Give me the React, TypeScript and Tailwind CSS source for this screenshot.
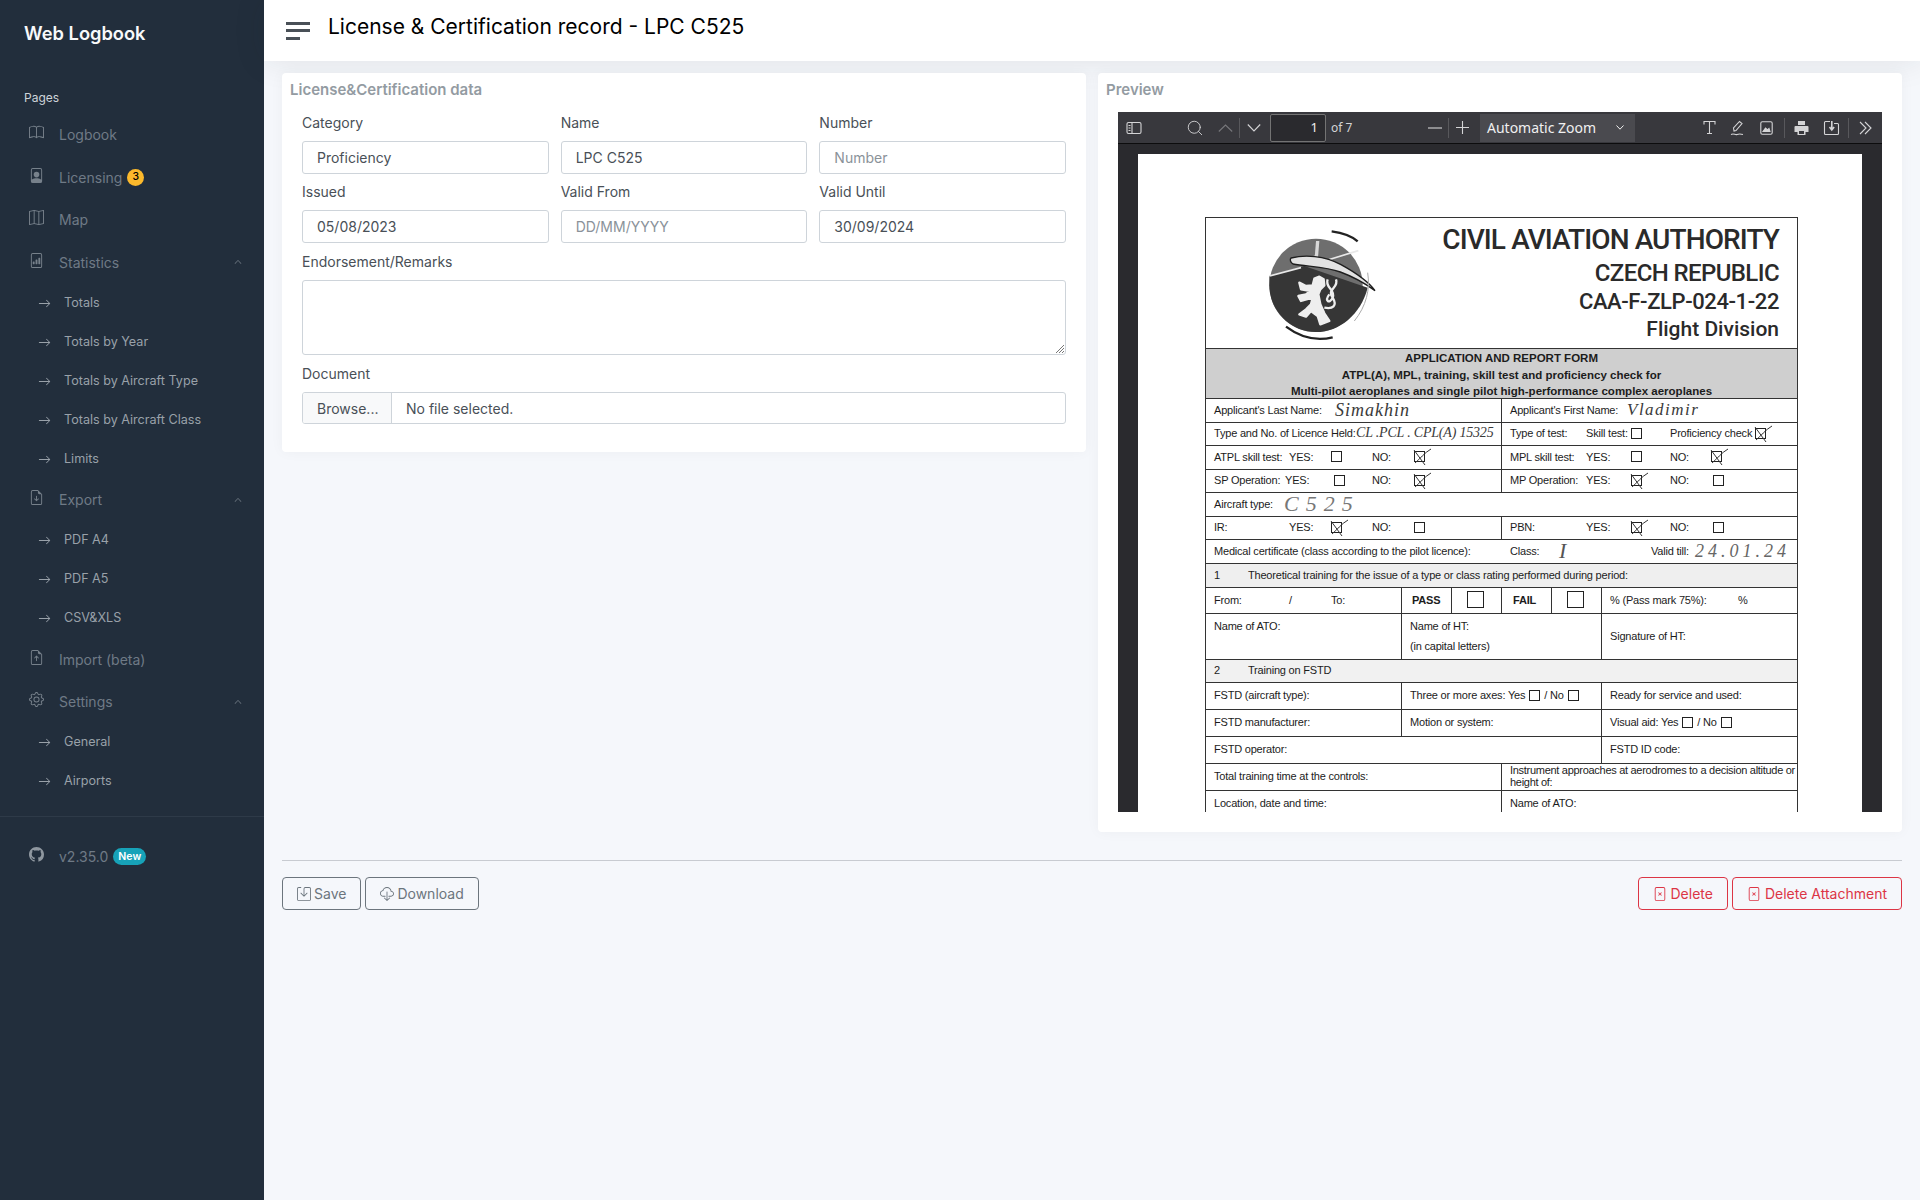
import type { ReactNode } from "react";
import {
  BsArrowRight,
  BsBook,
  BsChevronUp,
  BsCloudDownload,
  BsFileBarGraph,
  BsFileEarmarkArrowDown,
  BsFileEarmarkArrowUp,
  BsFilePerson,
  BsFileX,
  BsGear,
  BsGithub,
  BsMap,
  BsSave,
} from "react-icons/bs";
import { Search } from "lucide-react";

function NavItem({ icon, label, extra, open }: { icon: ReactNode; label: string; extra?: ReactNode; open?: boolean }) {
  return (
    <div className="flex h-[42.5px] items-center pl-[29px] pr-[22px] text-[14px] text-[#6f7a86]">
      <span className="-mt-[4px] w-[30px] text-[15px] text-[#77818b]">{icon}</span>
      <span>{label}</span>
      {extra}
      {open && <BsChevronUp className="ml-auto text-[8px] text-[#8a939c]" />}
    </div>
  );
}

function SubItem({ label }: { label: string }) {
  return (
    <div className="flex h-[39px] items-center pl-[38px] text-[12.6px] text-[#99a1a9]">
      <BsArrowRight className="mr-[13px] w-[13px] text-[13px]" />
      <span>{label}</span>
    </div>
  );
}

function Sidebar() {
  return (
    <aside className="flex w-[264px] shrink-0 flex-col bg-[#222e3c]">
      <div className="pl-[24px] pt-[22px] text-[18.3px] font-semibold leading-[22px] text-[#f8f9fa]">Web Logbook</div>
      <div className="pl-[24px] pt-[46px] pb-[8.5px] text-[12px] leading-[15px] text-[#ced4da]">Pages</div>
      <NavItem icon={<BsBook />} label="Logbook" />
      <NavItem
        icon={<BsFilePerson />}
        label="Licensing"
        extra={
          <span className="ml-[5px] flex h-[17px] w-[17px] items-center justify-center rounded-full bg-[#fcb92c] text-[10.5px] font-medium text-black">
            3
          </span>
        }
      />
      <NavItem icon={<BsMap />} label="Map" />
      <NavItem icon={<BsFileBarGraph />} label="Statistics" open />
      <SubItem label="Totals" />
      <SubItem label="Totals by Year" />
      <SubItem label="Totals by Aircraft Type" />
      <SubItem label="Totals by Aircraft Class" />
      <SubItem label="Limits" />
      <NavItem icon={<BsFileEarmarkArrowDown />} label="Export" open />
      <SubItem label="PDF A4" />
      <SubItem label="PDF A5" />
      <SubItem label="CSV&XLS" />
      <NavItem icon={<BsFileEarmarkArrowUp />} label="Import (beta)" />
      <NavItem icon={<BsGear />} label="Settings" open />
      <SubItem label="General" />
      <SubItem label="Airports" />
      <div className="mt-[15px] border-t border-[#2e3a48] pt-[18px]">
        <NavItem
          icon={<BsGithub className="text-[#8f979f]" />}
          label="v2.35.0"
          extra={
            <span className="ml-[5px] rounded-full bg-[#17a2b8] px-[5px] py-[1px] text-[10.5px] font-semibold leading-[15px] text-white">
              New
            </span>
          }
        />
      </div>
    </aside>
  );
}

function Field({ label, value, placeholder }: { label: string; value?: string; placeholder?: string }) {
  return (
    <div>
      <div className="mb-[8px] text-[14px] leading-[21px] text-[#495057]">{label}</div>
      <div className={`flex h-[33px] items-center rounded-[3px] border border-[#ced4da] bg-white px-[14px] text-[14px] ${value ? "text-[#495057]" : "text-[#8a9299]"}`}>
        {value ?? placeholder}
      </div>
    </div>
  );
}

function DataCard() {
  return (
    <section className="h-[379px] w-[804px] rounded-[4px] bg-white shadow-[0_0_14px_rgba(33,37,41,0.04)]">
      <h2 className="pl-[8px] pt-[6px] text-[15px] font-semibold leading-[21px] text-[#939ba2]">License&amp;Certification data</h2>
      <div className="px-[20px] pt-[12px]">
        <div className="grid grid-cols-3 gap-x-[12px] gap-y-[7px]">
          <Field label="Category" value="Proficiency" />
          <Field label="Name" value="LPC C525" />
          <Field label="Number" placeholder="Number" />
          <Field label="Issued" value="05/08/2023" />
          <Field label="Valid From" placeholder="DD/MM/YYYY" />
          <Field label="Valid Until" value="30/09/2024" />
        </div>
        <div className="mt-[8px] text-[14px] leading-[21px] text-[#495057]">Endorsement/Remarks</div>
        <div className="relative mt-[8px] h-[75px] rounded-[3px] border border-[#ced4da] bg-white">
          <svg className="absolute bottom-0 right-0" width="12" height="12" viewBox="0 0 12 12" stroke="#777" strokeWidth="1">
            <path d="M11 3 3 11M11 6 6 11M11 9 9 11" />
          </svg>
        </div>
        <div className="mt-[8px] text-[14px] leading-[21px] text-[#495057]">Document</div>
        <div className="mt-[8px] flex h-[32px] items-center overflow-hidden rounded-[3px] border border-[#ced4da] text-[14px] text-[#495057]">
          <span className="flex h-full w-[89px] items-center border-r border-[#ced4da] bg-[#f8f9fa] pl-[14px]">Browse...</span>
          <span className="pl-[14px]">No file selected.</span>
        </div>
      </div>
    </section>
  );
}

function ToolSep({ className }: { className: string }) {
  return <span className={`h-[20px] w-px bg-[#58585c] ${className}`} />;
}

function PdfToolbar() {
  return (
    <div className="flex h-[32px] shrink-0 items-center border-b border-[#0c0c0d] bg-[#38383d] font-['Noto_Sans',sans-serif] text-[#d4d4d6]">
      <svg className="ml-[8px]" width="16" height="16" viewBox="0 0 16 16" fill="none" stroke="currentColor" strokeWidth="1.1">
        <rect x="1" y="2.5" width="14" height="11" rx="1.5" />
        <path d="M6 2.5v11M2.5 5.5h2M2.5 8h2M2.5 10.5h2" />
      </svg>
      <Search className="ml-[44px]" size={18} strokeWidth={1.2} />
      <svg className="ml-[14px] text-[#77777b]" width="15" height="8" viewBox="0 0 15 8" fill="none" stroke="currentColor" strokeWidth="1.1">
        <path d="M.8 7.5 7.5 1l6.7 6.5" />
      </svg>
      <ToolSep className="ml-[6px]" />
      <svg className="ml-[7px]" width="14" height="8" viewBox="0 0 14 8" fill="none" stroke="currentColor" strokeWidth="1.1">
        <path d="M.8.5 7 7l6.2-6.5" />
      </svg>
      <div className="ml-[9px] flex h-[28px] w-[56px] items-center justify-end rounded-[2px] border border-[#737373] bg-[#2a2a2e] pr-[7px] text-[13px] text-[#f0f0f0]">1</div>
      <span className="ml-[5px] w-[22px] whitespace-nowrap text-[12px] text-[#d4d4d6]">of 7</span>
      <svg className="ml-[75px]" width="14" height="2" viewBox="0 0 14 2" fill="none" stroke="currentColor" strokeWidth="1.1">
        <path d="M0 1h14" />
      </svg>
      <ToolSep className="ml-[6px]" />
      <svg className="ml-[7px]" width="13" height="13" viewBox="0 0 13 13" fill="none" stroke="currentColor" strokeWidth="1.1">
        <path d="M0 6.5h13M6.5 0v13" />
      </svg>
      <div className="ml-[11px] flex h-[28px] w-[155px] items-center bg-[#4a4a4f] pl-[7px] text-[14px] text-[#f0f0f0]">
        Automatic Zoom
        <svg className="ml-auto mr-[11px]" width="8" height="5" viewBox="0 0 8 5" fill="none" stroke="currentColor" strokeWidth="1">
          <path d="M.5.5 4 4.2 7.5.5" />
        </svg>
      </div>
      <svg className="ml-[67px]" width="15" height="15" viewBox="0 0 15 15" fill="none" stroke="currentColor" strokeWidth="1.1">
        <path d="M2 4.5V1.5h11v3M7.5 1.5V13.5M5 13.5h5" />
      </svg>
      <svg className="ml-[13px]" width="14" height="16" viewBox="0 0 14 16" fill="none" stroke="currentColor" strokeWidth="1.1">
        <path d="M4 11 3.5 8 9.5 1.5l2.5 2L6 10.5 4 11ZM1 14.5c3-1.5 4 .8 6 0s3-.8 6 0" />
      </svg>
      <svg className="ml-[16px]" width="13" height="14" viewBox="0 0 13 14" fill="none" stroke="currentColor" strokeWidth="1.1">
        <rect x="0.8" y="0.8" width="11.4" height="12.4" rx="1.5" />
        <path d="M3 10.5 5.5 7l2 2 1.5-1.5 1 3H3Z" fill="currentColor" />
      </svg>
      <ToolSep className="ml-[11px]" />
      <svg className="ml-[9px]" width="15" height="16" viewBox="0 0 15 16" fill="currentColor">
        <path d="M4 1h7v4H4zM1.5 6h12a1 1 0 0 1 1 1v5h-3v3h-8v-3H.5V7a1 1 0 0 1 1-1Z" />
        <path d="M5 11h5v3H5z" fill="#38383d" />
      </svg>
      <svg className="ml-[14px]" width="17" height="16" viewBox="0 0 17 16" fill="none" stroke="currentColor" strokeWidth="1.1">
        <path d="M7 1.5H2.5a1 1 0 0 0-1 1v11a1 1 0 0 0 1 1h12a1 1 0 0 0 1-1v-9a1 1 0 0 0-1-1H11" />
        <path d="M8.8 1v8M6.5 7l2.3 3 2.3-3" strokeWidth="1.6" />
      </svg>
      <ToolSep className="ml-[8px]" />
      <svg className="ml-[10px]" width="13" height="14" viewBox="0 0 13 14" fill="none" stroke="currentColor" strokeWidth="1.1">
        <path d="M1 1l6 6-6 6M6 1l6 6-6 6" />
      </svg>
    </div>
  );
}

function Box({ crossed, className }: { crossed?: boolean; className?: string }) {
  return (
    <span className={`relative inline-block h-[11px] w-[11px] shrink-0 border border-[#222] ${className ?? ""}`}>
      {crossed && (
        <svg className="absolute -left-[3px] -top-[5px] overflow-visible" width="20" height="20" viewBox="0 0 20 20" fill="none" stroke="#333" strokeWidth="1">
          <path d="M2 3 13 18M3 16C8 12 12 6 19 2" />
        </svg>
      )}
    </span>
  );
}

function Row({ h, className, children }: { h: string; className?: string; children: ReactNode }) {
  return <div className={`flex items-center border-b-[1.5px] border-[#333] ${h} ${className ?? ""}`}>{children}</div>;
}

function Cell({ w, children, border = true }: { w: string; children?: ReactNode; border?: boolean }) {
  return <div className={`flex h-full shrink-0 items-center pb-[2px] pl-[8px] ${border ? "border-r border-[#333]" : ""} ${w}`}>{children}</div>;
}

function Hand({ className, children }: { className: string; children: ReactNode }) {
  return <span className={`font-['Liberation_Serif',serif] italic text-[#3a3a3a] ${className}`}>{children}</span>;
}

function Crest() {
  return (
    <svg width="120" height="120" viewBox="0 0 360 360" className="ml-[55px] mt-[8px] shrink-0">
      <circle cx="165" cy="178" r="140" fill="#6e6e6e" />
      <path d="M25 150 130 120 320 185C300 265 235 318 165 318 85 318 25 250 25 178Z" fill="#363636" />
      <path d="M25 150 120 125M200 102 292 74" stroke="#e8e8e8" strokeWidth="5" fill="none" />
      <path d="M165 45h10l-4 50h-10Z" fill="#d8d8d8" />
      <path d="M132 96 165 88 170 96Z" fill="#d8d8d8" />
      <path d="M90 96c40-10 100-8 150 20 40 22 80 48 102 78-30-22-66-42-104-56-44-16-100-16-142-24-8-4-10-14-6-18Z" fill="#e2e2e2" stroke="#1e1e1e" strokeWidth="4" />
      <path d="M160 158 175 152 188 160 190 178 178 190 172 205 178 235 190 262 205 285 178 295 170 270 150 255 135 272 115 265 135 250 150 235 155 215 120 225 112 210 135 205 150 195 120 190 115 170 135 180 155 178Z" fill="#eee" stroke="#eee" strokeWidth="7" strokeLinejoin="round" />
      <path d="M200 160c-10 25 25 30 15 55-10 20-25 10-10-10M225 160c10 25-30 30-10 55 15 25 0 35-25 30" stroke="#eee" strokeWidth="7" fill="none" />
      <path d="M212 16c30 4 60 14 78 30" stroke="#222" strokeWidth="7" fill="none" />
      <path d="M75 302c40 30 90 44 140 32" stroke="#222" strokeWidth="7" fill="none" />
      <path d="M320 140c8 50-4 100-40 145" stroke="#aaa" strokeWidth="3" fill="none" />
    </svg>
  );
}

function PdfPage() {
  return (
    <div className="mx-auto h-[658px] w-[724px] overflow-hidden bg-white pl-[67px] pt-[63px] font-['Liberation_Sans',sans-serif]">
      <div className="w-[593px] border-x-[1.5px] border-t-[1.5px] border-[#333] text-[11px] leading-[12px] tracking-[-0.2px] text-[#1c1c1c]">
        <div className="flex h-[131px] border-b-[1.5px] border-[#333]">
          <Crest />
          <div className="ml-auto pr-[18px] pt-[5px] text-right font-['Roboto',sans-serif] font-medium text-[#2a2a2a]">
            <div className="text-[28px] leading-[34px] tracking-[-0.9px]">CIVIL AVIATION AUTHORITY</div>
            <div className="text-[24px] leading-[32px] tracking-[-0.6px]">CZECH REPUBLIC</div>
            <div className="text-[22px] leading-[25px] tracking-[-0.4px]">CAA-F-ZLP-024-1-22</div>
            <div className="text-[21px] leading-[30px] tracking-normal">Flight Division</div>
          </div>
        </div>
        <div className="flex h-[50px] flex-col items-center justify-center border-b-[1.5px] border-[#333] bg-[#cfcfcf] pt-[3px] text-[11.5px] font-bold leading-[16.5px] tracking-normal">
          <div>APPLICATION AND REPORT FORM</div>
          <div>ATPL(A), MPL, training, skill test and proficiency check for</div>
          <div>Multi-pilot aeroplanes and single pilot high-performance complex aeroplanes</div>
        </div>
        <Row h="h-[24px]">
          <Cell w="w-[296px]">
            <span className="w-[121px]">Applicant's Last Name:</span>
            <Hand className="text-[18px] tracking-[1px]">Simakhin</Hand>
          </Cell>
          <Cell w="w-[297px]" border={false}>
            <span className="w-[117px]">Applicant's First Name:</span>
            <Hand className="text-[17px] tracking-[1.5px]">Vladimir</Hand>
          </Cell>
        </Row>
        <Row h="h-[23px]">
          <Cell w="w-[296px]">
            <span className="w-[142px]">Type and No. of Licence Held:</span>
            <Hand className="whitespace-nowrap text-[14px]">CL .PCL . CPL(A) 15325</Hand>
          </Cell>
          <Cell w="w-[297px]" border={false}>
            <span className="w-[76px]">Type of test:</span>
            <span className="w-[45px]">Skill test:</span>
            <Box />
            <span className="ml-[28px] w-[85px]">Proficiency check</span>
            <Box crossed />
          </Cell>
        </Row>
        <Row h="h-[24px]">
          <Cell w="w-[296px]">
            <span className="w-[75px]">ATPL skill test:</span>
            <span className="w-[42px]">YES:</span>
            <Box />
            <span className="ml-[30px] w-[42px]">NO:</span>
            <Box crossed />
          </Cell>
          <Cell w="w-[297px]" border={false}>
            <span className="w-[76px]">MPL skill test:</span>
            <span className="w-[45px]">YES:</span>
            <Box />
            <span className="ml-[28px] w-[41px]">NO:</span>
            <Box crossed />
          </Cell>
        </Row>
        <Row h="h-[23px]">
          <Cell w="w-[296px]">
            <span className="w-[71px]">SP Operation:</span>
            <span className="w-[49px]">YES:</span>
            <Box />
            <span className="ml-[27px] w-[42px]">NO:</span>
            <Box crossed />
          </Cell>
          <Cell w="w-[297px]" border={false}>
            <span className="w-[76px]">MP Operation:</span>
            <span className="w-[45px]">YES:</span>
            <Box crossed />
            <span className="ml-[28px] w-[43px]">NO:</span>
            <Box />
          </Cell>
        </Row>
        <Row h="h-[24px]">
          <Cell w="w-[593px]" border={false}>
            <span className="w-[70px]">Aircraft type:</span>
            <Hand className="text-[22px] tracking-[7px] text-[#777]">C525</Hand>
          </Cell>
        </Row>
        <Row h="h-[23px]">
          <Cell w="w-[296px]">
            <span className="w-[75px]">IR:</span>
            <span className="w-[42px]">YES:</span>
            <Box crossed />
            <span className="ml-[30px] w-[42px]">NO:</span>
            <Box />
          </Cell>
          <Cell w="w-[297px]" border={false}>
            <span className="w-[76px]">PBN:</span>
            <span className="w-[45px]">YES:</span>
            <Box crossed />
            <span className="ml-[28px] w-[43px]">NO:</span>
            <Box />
          </Cell>
        </Row>
        <Row h="h-[24px]">
          <Cell w="w-[296px]" border={false}>
            <span className="whitespace-nowrap">Medical certificate (class according to the pilot licence):</span>
          </Cell>
          <Cell w="w-[297px]" border={false}>
            <span className="w-[49px]">Class:</span>
            <Hand className="w-[92px] text-[22px] text-[#555]">I</Hand>
            <span className="w-[44px] whitespace-nowrap">Valid till:</span>
            <Hand className="whitespace-nowrap text-[18px] tracking-[4px] text-[#666]">24.01.24</Hand>
          </Cell>
        </Row>
        <Row h="h-[24px]" className="bg-[#efefef]">
          <Cell w="w-[593px]" border={false}>
            <span className="w-[34px]">1</span>
            <span>Theoretical training for the issue of a type or class rating performed during period:</span>
          </Cell>
        </Row>
        <Row h="h-[26px]">
          <Cell w="w-[196px]">
            <span className="w-[75px]">From:</span>
            <span className="w-[42px]">/</span>
            <span>To:</span>
          </Cell>
          <Cell w="w-[50px]">
            <span className="pl-[2px] font-bold">PASS</span>
          </Cell>
          <Cell w="w-[50px]">
            <Box className="ml-[7px] h-[17px] w-[17px]" />
          </Cell>
          <Cell w="w-[50px]">
            <span className="pl-[3px] font-bold">FAIL</span>
          </Cell>
          <Cell w="w-[50px]">
            <Box className="ml-[7px] h-[17px] w-[17px]" />
          </Cell>
          <Cell w="w-[197px]" border={false}>
            <span className="w-[128px]">% (Pass mark 75%):</span>
            <span>%</span>
          </Cell>
        </Row>
        <Row h="h-[46px]">
          <Cell w="w-[196px]">
            <span className="-mt-[19px]">Name of ATO:</span>
          </Cell>
          <Cell w="w-[200px]">
            <div className="flex flex-col gap-[8px]">
              <span>Name of HT:</span>
              <span>(in capital letters)</span>
            </div>
          </Cell>
          <Cell w="w-[197px]" border={false}>Signature of HT:</Cell>
        </Row>
        <Row h="h-[23px]" className="bg-[#f1f1f1]">
          <Cell w="w-[593px]" border={false}>
            <span className="w-[34px]">2</span>
            <span>Training on FSTD</span>
          </Cell>
        </Row>
        <Row h="h-[27px]">
          <Cell w="w-[196px]">FSTD (aircraft type):</Cell>
          <Cell w="w-[200px]">
            <span className="whitespace-nowrap">Three or more axes: Yes</span>
            <Box className="ml-[4px]" />
            <span className="mx-[4px] whitespace-nowrap">/ No</span>
            <Box />
          </Cell>
          <Cell w="w-[197px]" border={false}>Ready for service and used:</Cell>
        </Row>
        <Row h="h-[27px]">
          <Cell w="w-[196px]">FSTD manufacturer:</Cell>
          <Cell w="w-[200px]">Motion or system:</Cell>
          <Cell w="w-[197px]" border={false}>
            <span className="whitespace-nowrap">Visual aid: Yes</span>
            <Box className="ml-[4px]" />
            <span className="mx-[4px] whitespace-nowrap">/ No</span>
            <Box />
          </Cell>
        </Row>
        <Row h="h-[27px]">
          <Cell w="w-[396px]">FSTD operator:</Cell>
          <Cell w="w-[197px]" border={false}>FSTD ID code:</Cell>
        </Row>
        <Row h="h-[27px]">
          <Cell w="w-[296px]">Total training time at the controls:</Cell>
          <Cell w="w-[297px]" border={false}>
            <span className="whitespace-nowrap tracking-[-0.29px]">
              Instrument approaches at aerodromes to a decision altitude or
              <br />
              height of:
            </span>
          </Cell>
        </Row>
        <Row h="h-[27px]">
          <Cell w="w-[296px]">Location, date and time:</Cell>
          <Cell w="w-[297px]" border={false}>Name of ATO:</Cell>
        </Row>
      </div>
    </div>
  );
}

function PreviewCard() {
  return (
    <section className="flex h-[759px] w-[804px] flex-col rounded-[4px] bg-white shadow-[0_0_14px_rgba(33,37,41,0.04)]">
      <h2 className="pl-[8px] pt-[6px] text-[15px] font-semibold leading-[21px] text-[#939ba2]">Preview</h2>
      <div className="mx-[20px] mt-[12px] flex h-[700px] flex-col overflow-hidden bg-[#2a2a2e]">
        <PdfToolbar />
        <div className="pt-[10px]">
          <PdfPage />
        </div>
      </div>
    </section>
  );
}

function ActionButton({ icon, label, danger }: { icon: ReactNode; label: string; danger?: boolean }) {
  return (
    <button className={`flex h-[33px] items-center justify-center rounded-[4px] border px-[14px] text-[14px] ${danger ? "gap-[4px] border-[#dc3545] text-[#dc3545]" : "gap-[3px] border-[#6c757d] text-[#6c757d]"}`}>
      {icon}
      {label}
    </button>
  );
}

export default function App() {
  return (
    <div className="flex min-h-[1200px] bg-[#f5f7fb] font-['Inter',sans-serif]">
      <Sidebar />
      <main className="min-w-0 flex-1">
        <header className="flex h-[61px] items-center bg-white pl-[22px] shadow-[0_0_32px_rgba(33,37,41,0.1)]">
          <div className="flex w-[24px] flex-col gap-[4.5px]">
            <span className="h-[3px] w-[24px] bg-[#495057]" />
            <span className="h-[3px] w-[24px] bg-[#495057]" />
            <span className="h-[3px] w-[14px] bg-[#495057]" />
          </div>
          <h1 className="-mt-[7px] ml-[18px] text-[21px] font-normal leading-[26px] text-black">License &amp; Certification record - LPC C525</h1>
        </header>
        <div className="px-[18px] pt-[12px]">
          <div className="flex gap-[12px]">
            <DataCard />
            <PreviewCard />
          </div>
          <div className="mt-[28px] border-t border-[#c8cbd1] pt-[16px]">
            <div className="flex gap-[4px]">
              <ActionButton icon={<BsSave />} label="Save" />
              <ActionButton icon={<BsCloudDownload />} label="Download" />
              <div className="ml-auto flex gap-[4px]">
                <ActionButton danger icon={<BsFileX />} label="Delete" />
                <ActionButton danger icon={<BsFileX />} label="Delete Attachment" />
              </div>
            </div>
          </div>
        </div>
      </main>
    </div>
  );
}
